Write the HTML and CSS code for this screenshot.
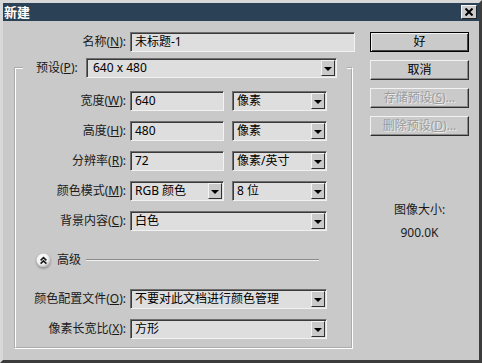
FILE: index.html
```html
<!DOCTYPE html>
<html lang="zh-CN">
<head>
    <meta charset="UTF-8">
    <title>新建</title>
    <link rel="stylesheet" href="styles.css">
</head>
<body>
    <div class="window">
        <div class="titlebar">
            <span class="title">新建</span>
            <button class="close-button">
                <svg width="8" height="8" viewBox="0 0 8 8"><path d="M0.5 0.5 L7.5 7.5 M7.5 0.5 L0.5 7.5" stroke="#000" stroke-width="2"/></svg>
            </button>
        </div>
        <div class="content">
            <div class="main">
                <div class="row name-row">
                    <span class="label">名称(<u>N</u>):</span>
                    <div class="field name-field">未标题-1</div>
                </div>
                <fieldset class="group">
                    <legend class="preset">
                        <span class="preset-label">预设(<u>P</u>):</span>
                        <div class="select preset-select"><span class="value">640 x 480</span><span class="arrow"></span></div>
                    </legend>
                    <div class="rows">
                        <div class="row">
                            <span class="label">宽度(<u>W</u>):</span>
                            <div class="field small">640</div>
                            <div class="select unit"><span class="value">像素</span><span class="arrow"></span></div>
                        </div>
                        <div class="row">
                            <span class="label">高度(<u>H</u>):</span>
                            <div class="field small">480</div>
                            <div class="select unit"><span class="value">像素</span><span class="arrow"></span></div>
                        </div>
                        <div class="row">
                            <span class="label">分辨率(<u>R</u>):</span>
                            <div class="field small">72</div>
                            <div class="select unit"><span class="value">像素/英寸</span><span class="arrow"></span></div>
                        </div>
                        <div class="row">
                            <span class="label">颜色模式(<u>M</u>):</span>
                            <div class="select small"><span class="value">RGB 颜色</span><span class="arrow"></span></div>
                            <div class="select unit"><span class="value">8 位</span><span class="arrow"></span></div>
                        </div>
                        <div class="row">
                            <span class="label">背景内容(<u>C</u>):</span>
                            <div class="select wide"><span class="value">白色</span><span class="arrow"></span></div>
                        </div>
                        <div class="advanced">
                            <svg class="toggle" width="15" height="15" viewBox="0 0 15 15">
                                <defs>
                                    <radialGradient id="knob" cx="0.4" cy="0.35" r="0.7">
                                        <stop offset="0" stop-color="#ffffff"/>
                                        <stop offset="0.6" stop-color="#f0f0f0"/>
                                        <stop offset="1" stop-color="#a8a8a8"/>
                                    </radialGradient>
                                </defs>
                                <circle cx="7.5" cy="7.5" r="7" fill="url(#knob)"/>
                                <path d="M4.6 7.4 L7.5 4.6 L10.4 7.4 M4.6 10.6 L7.5 7.8 L10.4 10.6" fill="none" stroke="#1a1a1a" stroke-width="1.6"/>
                            </svg>
                            <span class="advanced-label">高级</span>
                            <span class="rule"></span>
                        </div>
                        <div class="row">
                            <span class="label">颜色配置文件(<u>O</u>):</span>
                            <div class="select wide"><span class="value">不要对此文档进行颜色管理</span><span class="arrow"></span></div>
                        </div>
                        <div class="row">
                            <span class="label">像素长宽比(<u>X</u>):</span>
                            <div class="select wide"><span class="value">方形</span><span class="arrow"></span></div>
                        </div>
                    </div>
                </fieldset>
            </div>
            <div class="side">
                <button class="button default">好</button>
                <button class="button">取消</button>
                <button class="button" disabled>存储预设(<u>S</u>)...</button>
                <button class="button" disabled>删除预设(<u>D</u>)...</button>
                <div class="size-info">
                    <div>图像大小:</div>
                    <div>900.0K</div>
                </div>
            </div>
        </div>
    </div>
</body>
</html>
```

FILE: styles.css
```css
* {
    box-sizing: border-box;
}
body {
    margin: 0;
    font-family: "Noto Sans", "Noto Sans CJK SC", sans-serif;
    font-size: 12px;
    color: #111;
}
.window {
    width: 482px;
    height: 363px;
    background-color: #c9c9c9;
    border: 3px solid;
    border-color: #d8d8d8 #3c3c3c #3c3c3c #d8d8d8;
    display: flex;
    flex-direction: column;
}
.titlebar {
    height: 18px;
    background-color: #2b4256;
    display: flex;
    align-items: center;
    justify-content: space-between;
    padding: 0 2px 0 1px;
}
.title {
    color: white;
    font-weight: bold;
    font-size: 13px;
    line-height: 18px;
}
.close-button {
    width: 16px;
    height: 14px;
    padding: 0;
    background-color: #cacaca;
    border: 1px solid;
    border-color: #f4f4f4 #222 #222 #f4f4f4;
    display: flex;
    align-items: center;
    justify-content: center;
}
.content {
    flex: 1;
    display: flex;
    gap: 15px;
    padding: 11px 0 0 11px;
}
.main {
    width: 341px;
}
.row {
    display: flex;
    align-items: center;
    height: 20px;
    line-height: 18px;
}
.label {
    width: 114px;
    flex-shrink: 0;
    text-align: right;
    padding-right: 4px;
    white-space: nowrap;
    color: #1a1a1a;
}
.name-row .label {
    width: 116px;
}
.field, .select {
    height: 20px;
    background-color: #dedede;
    border: 1px solid;
    border-color: #6e6e6e #f2f2f2 #f2f2f2 #6e6e6e;
    box-shadow: inset 1px 1px #3a3a3a;
    padding-left: 4px;
    display: flex;
    align-items: center;
    white-space: nowrap;
    color: #000;
}
.name-field {
    width: 225px;
}
.small {
    width: 94px;
}
.unit {
    width: 95px;
    margin-left: 8px;
}
.wide {
    width: 197px;
}
.arrow {
    margin-left: auto;
    margin-right: 1px;
    width: 14px;
    height: 16px;
    flex-shrink: 0;
    background-color: #cacaca;
    border: 1px solid;
    border-color: #f4f4f4 #303030 #303030 #f4f4f4;
    display: flex;
    align-items: center;
    justify-content: center;
}
.arrow::after {
    content: "";
    border-left: 4px solid transparent;
    border-right: 4px solid transparent;
    border-top: 4px solid #000;
    margin-top: 1px;
}
.group {
    width: 339px;
    min-width: 0;
    margin: 6px 0 0 0;
    padding: 13px 0 8px 0;
    border: 2px groove #ffffff;
}
.preset {
    display: flex;
    align-items: center;
    height: 20px;
    margin-left: 7px;
    padding: 0 10px 0 13px;
    line-height: 18px;
}
.preset-label {
    width: 50px;
    color: #1a1a1a;
}
.preset-select {
    width: 251px;
    padding-left: 6px;
}
.rows {
    display: flex;
    flex-direction: column;
    gap: 10px;
}
.advanced {
    display: flex;
    align-items: center;
    height: 16px;
    margin: 11px 0;
    padding-left: 20px;
    line-height: 16px;
}
.toggle {
    filter: drop-shadow(0 1px 1px rgba(0,0,0,0.35));
}
.advanced-label {
    margin-left: 6px;
    color: #1a1a1a;
}
.rule {
    flex: 1;
    height: 2px;
    margin: 0 32px 0 5px;
    border-top: 1px solid #8a8a8a;
    border-bottom: 1px solid #f2f2f2;
}
.side {
    width: 99px;
    display: flex;
    flex-direction: column;
    gap: 8px;
}
.button {
    width: 99px;
    height: 20px;
    padding: 0;
    font-family: inherit;
    font-size: 12px;
    line-height: 16px;
    color: #000;
    background-color: #cacaca;
    border: 1px solid;
    border-color: #f2f2f2 #2e2e2e #2e2e2e #f2f2f2;
    box-shadow: inset -1px -1px #8a8a8a;
}
.button.default {
    border-color: #000;
    box-shadow: inset 1px 1px #f2f2f2, inset -1px -1px #444;
}
.button:disabled {
    color: #9c9c9c;
    text-shadow: 1px 1px #ececec;
}
.size-info {
    margin-top: 54px;
    text-align: center;
    line-height: 23px;
    color: #1a1a1a;
}
```
